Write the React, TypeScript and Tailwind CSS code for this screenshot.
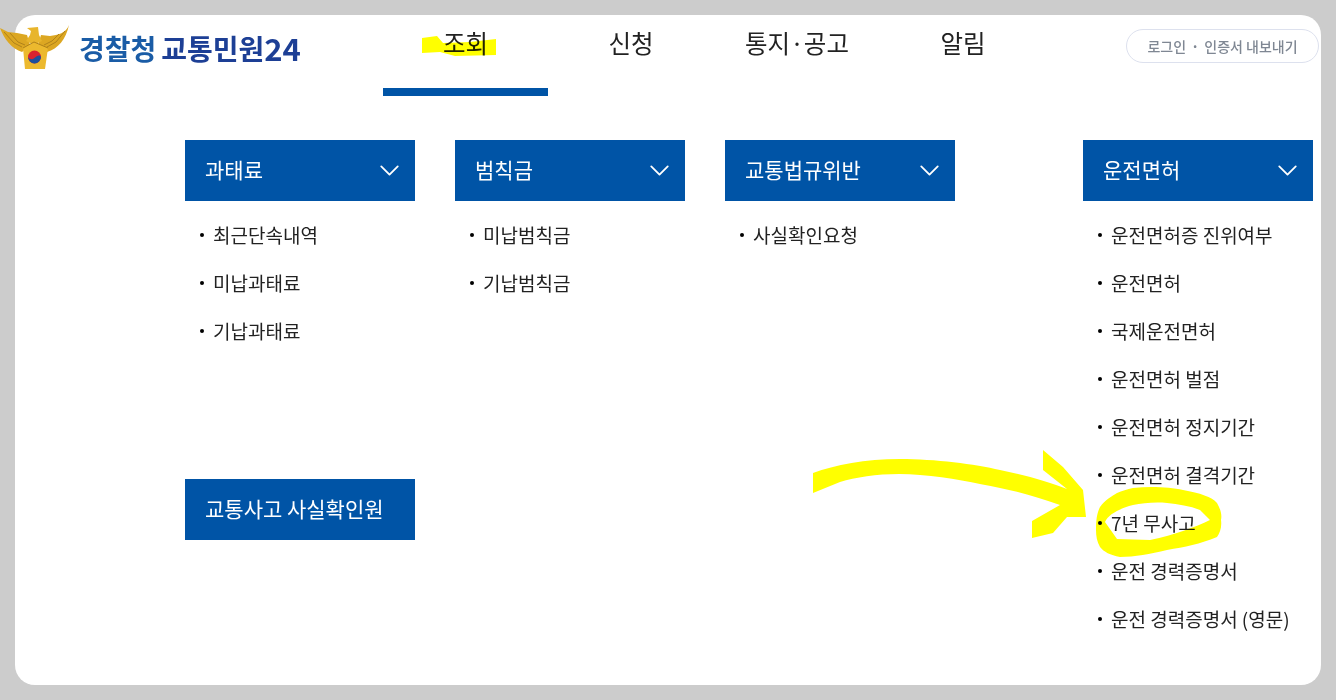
import { ChevronDown } from "lucide-react";

const font = { fontFamily: '"Noto Sans CJK KR", "Noto Sans", sans-serif' };

const navItems = ["조회", "신청", "통지·공고", "알림"];

const columns = [
  { title: "과태료", items: ["최근단속내역", "미납과태료", "기납과태료"] },
  { title: "범칙금", items: ["미납범칙금", "기납범칙금"] },
  { title: "교통법규위반", items: ["사실확인요청"] },
  {
    title: "운전면허",
    items: [
      "운전면허증 진위여부",
      "운전면허",
      "국제운전면허",
      "운전면허 벌점",
      "운전면허 정지기간",
      "운전면허 결격기간",
      "7년 무사고",
      "운전 경력증명서",
      "운전 경력증명서 (영문)",
    ],
  },
];

function Eagle() {
  return (
    <svg width="72" height="45" viewBox="0 0 72 45" className="shrink-0">
      <path d="M0 3 L8 7 L17 8 L27 10 L30 20 L22 27 C12 24 4 14 0 3 Z" fill="#dca722" />
      <path d="M69 0 C66 8 58 10 50 11 L41 10 L38 20 L47 27 C58 24 66 14 69 0 Z" fill="#dca722" />
      <path d="M4 7 L14 18 L22 22 M10 8 L18 17 L25 20 M65 6 L56 17 L47 22 M59 9 L52 16 L44 20" stroke="#b0821a" strokeWidth="1" fill="none" />
      <path d="M27 3 L38 2 L39 10 L42 16 L34 20 L26 16 L30 10 L31 6 Z" fill="#e8b52c" />
      <path d="M23 23 L34 17 L48 23 L45 44 L25 44 Z" fill="#ecb92e" />
      <path d="M23 23 L34 17 L48 23" stroke="#b0821a" strokeWidth="1" fill="none" />
      <circle cx="34.5" cy="32" r="6.5" fill="#d8232f" />
      <path d="M28 32 A6.5 6.5 0 0 0 41 32 C39.5 29 37 31 34.5 33 C32 35 29.5 34.5 28 32 Z" fill="#1c4f9c" />
    </svg>
  );
}

function MenuHeader({ title, chevron = true }: { title: string; chevron?: boolean }) {
  return (
    <div className="flex h-[61px] w-[230px] items-center justify-between bg-[#0054a6] pl-5 pr-[9px] text-[21px] text-white">
      <span className="pb-[2px]">{title}</span>
      {chevron && <ChevronDown size={33} strokeWidth={1.3} />}
    </div>
  );
}

function MenuColumn({ title, items }: { title: string; items: string[] }) {
  return (
    <div className="w-[230px]">
      <MenuHeader title={title} />
      <ul className="mt-[10px]">
        {items.map((item) => (
          <li key={item} className="flex h-12 items-center pl-[15px] text-[19px] text-[#222]">
            <span className="mr-[9px] h-1 w-1 rounded-full bg-black" />
            <span className="whitespace-nowrap">{item}</span>
          </li>
        ))}
      </ul>
    </div>
  );
}

export default function App() {
  return (
    <div className="relative h-[700px] w-[1336px] overflow-hidden bg-[#cccccc] p-[15px]" style={font}>
      <div className="h-[670px] w-[1306px] rounded-[20px] bg-white">
        <header className="flex h-[81px] items-start">
          <div className="-ml-[15px] mt-[10px] flex w-[383px] items-center">
            <Eagle />
            <div className="ml-[7px] flex items-center whitespace-nowrap text-[28px] leading-none font-bold">
              <span className="text-[#1a5ca6]">경찰청</span>
              <span className="ml-[5px] text-[#1d3f95]">교통민원</span>
              <span className="text-[31px] text-[#1d3f95]">24</span>
            </div>
          </div>
          <nav className="flex">
            {navItems.map((item, i) => (
              <a
                key={item}
                className={`flex h-[81px] justify-center border-b-[8px] pt-[10px] text-[24.5px] text-[#222] ${
                  i === 0 ? "w-[165px] border-[#0054a6]" : "w-[166px] border-transparent"
                }`}
              >
                {item}
              </a>
            ))}
          </nav>
          <button className="mt-[14px] ml-[80px] flex h-[34px] w-[193px] shrink-0 items-center justify-center rounded-full border border-[#dde1ee] text-[14px] font-medium text-[#7f8793]">
            <span>로그인</span>
            <span className="mx-[5px] font-bold">·</span>
            <span>인증서 내보내기</span>
          </button>
        </header>

        <div className="mt-[44px] flex pl-[170px]">
          <div className="w-[230px]">
            <MenuColumn {...columns[0]} />
            <div className="mt-[124px]">
              <MenuHeader title="교통사고 사실확인원" chevron={false} />
            </div>
          </div>
          <div className="ml-10">
            <MenuColumn {...columns[1]} />
          </div>
          <div className="ml-10">
            <MenuColumn {...columns[2]} />
          </div>
          <div className="ml-[128px]">
            <MenuColumn {...columns[3]} />
          </div>
        </div>
      </div>

      {/* yellow marker scribbles drawn over the page */}
      <svg width="1336" height="700" viewBox="0 0 1336 700" className="pointer-events-none absolute left-0 top-0">
        <g fill="#ffff00" style={{ mixBlendMode: "multiply" }}>
          <path d="M422 38 L437 36 L443 43 L470 42 L496 39 L496 55 L455 56 L440 52 L422 53 Z" />
          <path d="M813 473 C835 465 865 459 900 459 C935 459 975 464 1000 470 C1025 475 1050 482 1067 489 L1043 470 L1043 450 L1063 467 L1083 490 L1086 517 L1067 517 L1053 533 L1032 538 L1032 521 L1060 505 C1040 498 1020 492 1000 488 C975 483 950 477 920 475 C890 472 860 476 840 482 L813 493 Z" />
          <path
            fillRule="evenodd"
            d="M1133 488 C1150 486 1170 487 1183 490 C1200 493 1212 497 1217 503 C1221 510 1222 515 1221 520 C1222 527 1220 533 1217 537 C1200 544 1185 547 1167 550 C1150 554 1135 557 1120 557 C1110 555 1104 552 1100 547 C1097 542 1096 536 1096 530 C1096 520 1097 513 1100 507 C1105 500 1112 496 1117 493 C1122 491 1127 489 1133 488 Z M1133 505 C1118 509 1108 515 1105 522 L1117 539 L1150 540 C1175 535 1195 527 1210 520 L1200 510 C1190 506 1178 504 1167 503 C1155 502 1143 503 1133 505 Z"
          />
        </g>
      </svg>
    </div>
  );
}
